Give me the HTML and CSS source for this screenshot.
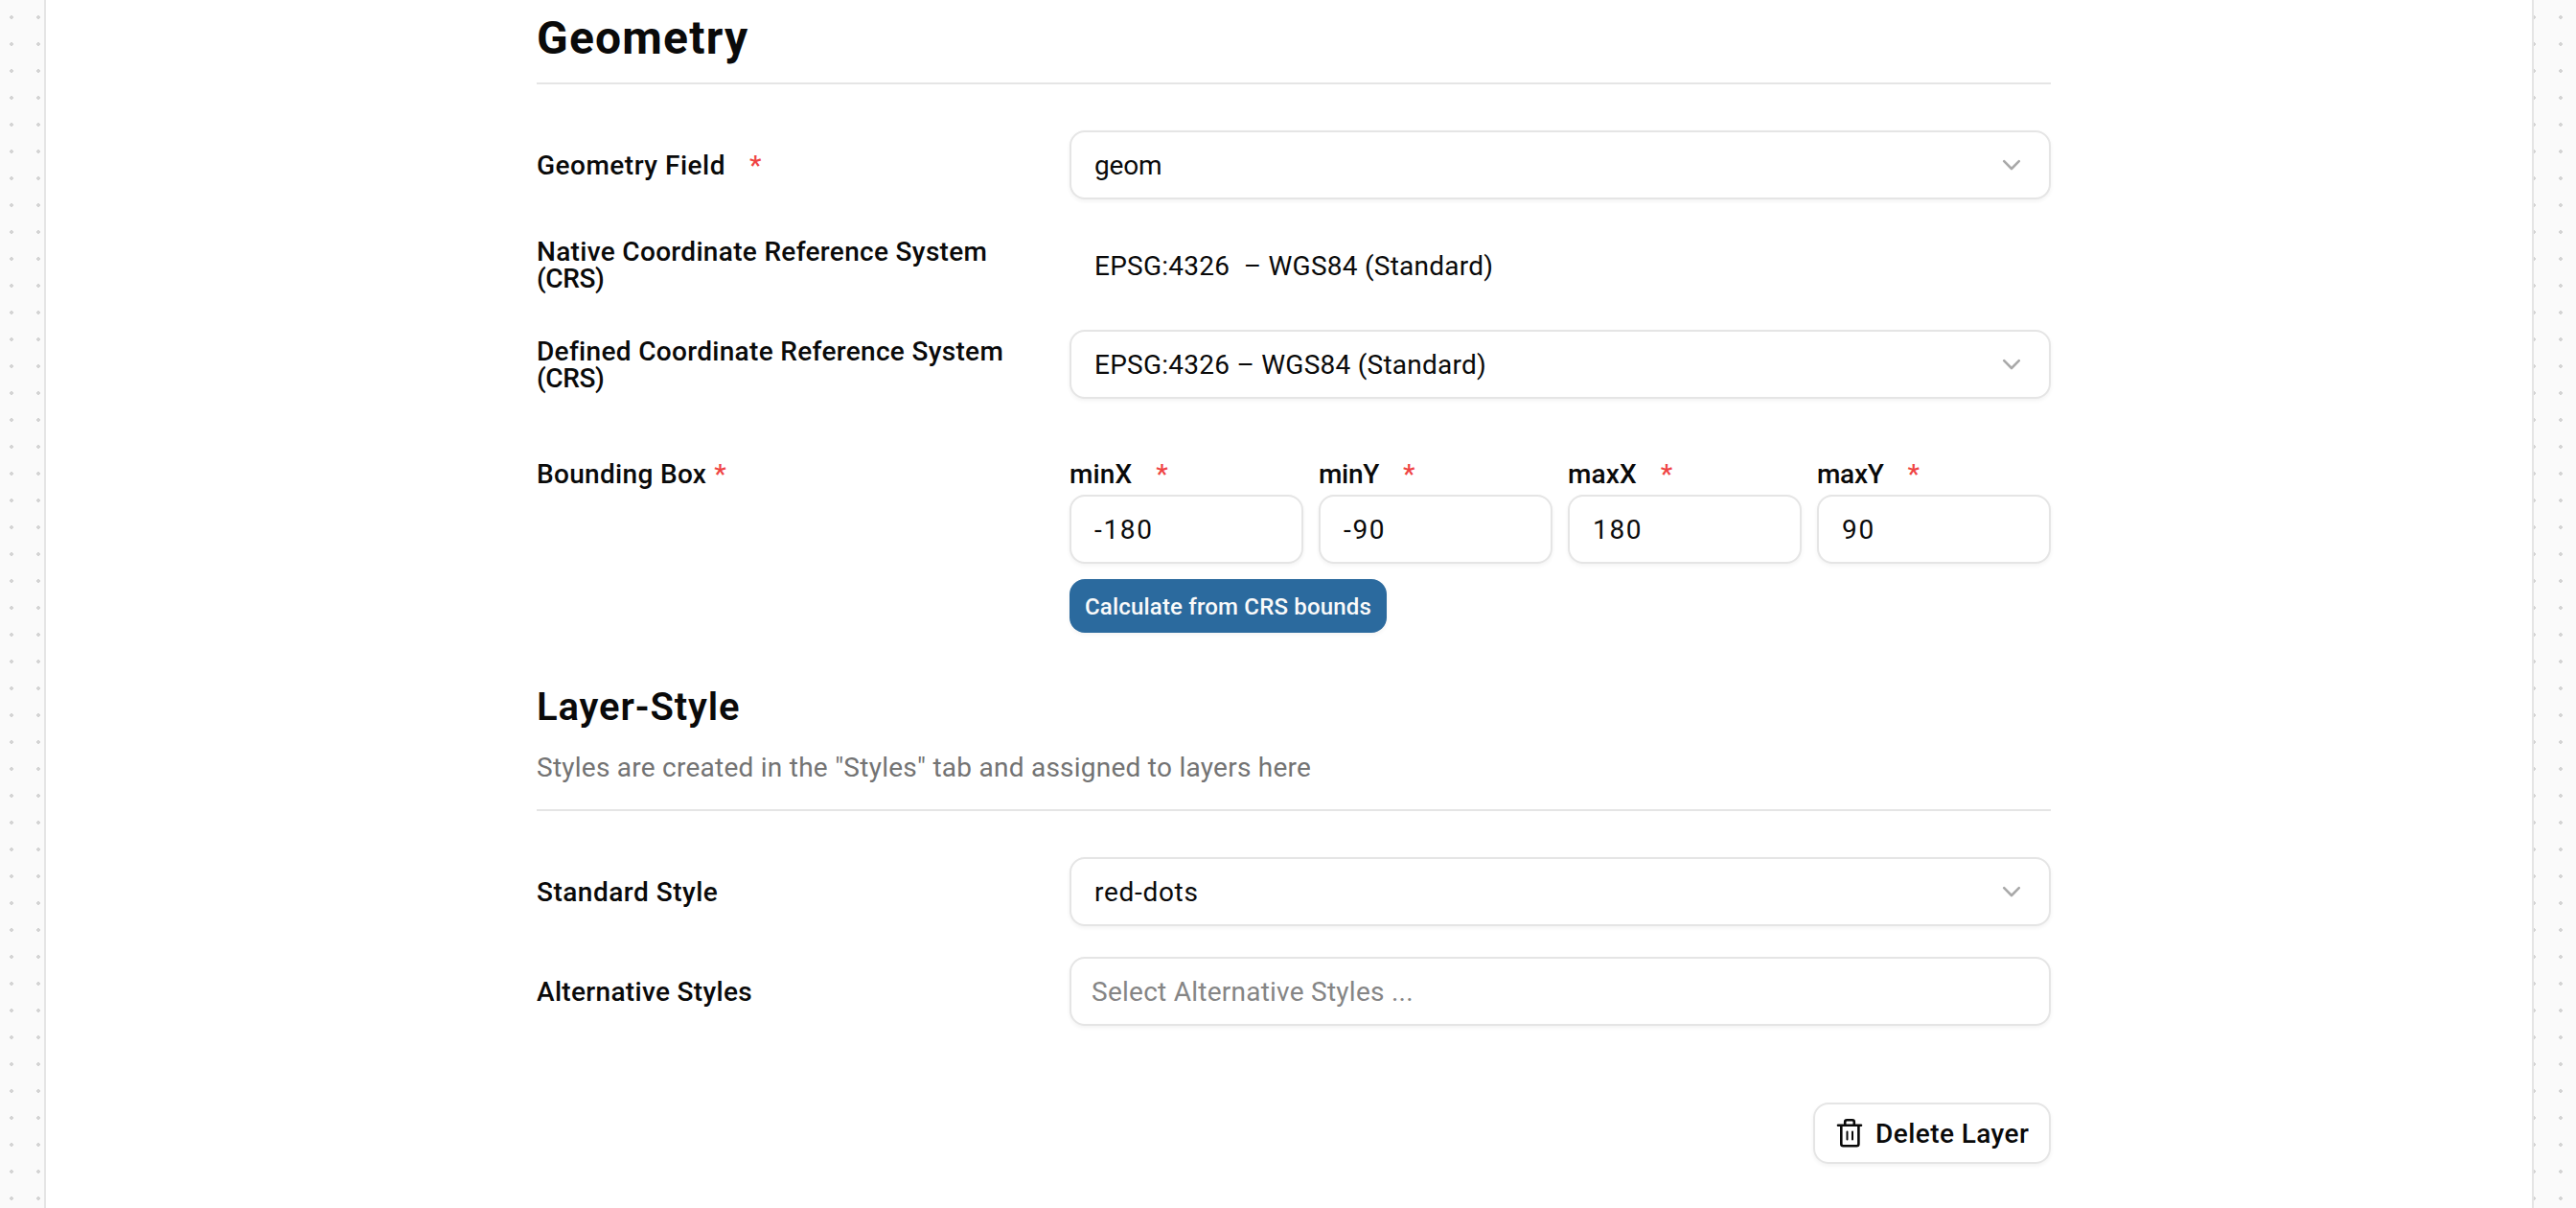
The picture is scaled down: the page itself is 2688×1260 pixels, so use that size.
FILE: index.html
```html
<!DOCTYPE html>
<html lang="en">
<head>
<meta charset="utf-8">
<title>Layer settings</title>
<link rel="stylesheet" href="styles.css">
</head>
<body>
<main class="page">
  <form class="content">
    <header class="section-head">
      <h1 class="title">Geometry</h1>
    </header>
    <section class="rows">
      <div class="row">
        <div class="label"><span class="t-wide">Geometry Field</span><span class="star">*</span></div>
        <div class="control"><span class="t-tight">geom</span>
          <svg class="chevron" viewBox="0 0 24 24"><path d="M4.2 8.2 12 16l7.8-7.8"/></svg></div>
      </div>
      <div class="row">
        <div class="label">Native Coordinate Reference System <span class="t-crs">(CRS)</span></div>
        <div class="static">EPSG:4326 &nbsp;– WGS84 (Standard)</div>
      </div>
      <div class="row">
        <div class="label">Defined Coordinate Reference System <span class="t-crs">(CRS)</span></div>
        <div class="control"><span>EPSG:4326 – WGS84 (Standard)</span>
          <svg class="chevron" viewBox="0 0 24 24"><path d="M4.2 8.2 12 16l7.8-7.8"/></svg></div>
      </div>
      <div class="row row-bbox">
        <div class="label">Bounding Box<span class="star star-near">*</span></div>
        <div class="bbox">
          <div class="bounds">
            <div class="bound"><div class="label"><span class="t-x">minX</span><span class="star">*</span></div><div class="control num">-180</div></div>
            <div class="bound"><div class="label"><span class="t-y">minY</span><span class="star">*</span></div><div class="control num">-90</div></div>
            <div class="bound"><div class="label"><span class="t-x">maxX</span><span class="star">*</span></div><div class="control num">180</div></div>
            <div class="bound"><div class="label"><span class="t-y">maxY</span><span class="star">*</span></div><div class="control num">90</div></div>
          </div>
          <div class="btn-primary">Calculate from CRS bounds</div>
        </div>
      </div>
    </section>

    <header class="section-head section-style">
      <h2 class="subtitle">Layer-Style</h2>
      <p class="hint">Styles are created in the "Styles" tab and assigned to layers here</p>
    </header>
    <section class="rows">
      <div class="row">
        <div class="label t-wide">Standard Style</div>
        <div class="control"><span class="t-dots">red-dots</span>
          <svg class="chevron" viewBox="0 0 24 24"><path d="M4.2 8.2 12 16l7.8-7.8"/></svg></div>
      </div>
      <div class="row">
        <div class="label">Alternative Styles</div>
        <div class="control placeholder">Select Alternative Styles ...</div>
      </div>
    </section>

    <footer class="actions">
      <div class="btn-outline">
        <svg class="trash" viewBox="0 0 28 32"><path d="M2 7.8h24M9.2 7.5V4.3a2 2 0 0 1 2-2h5.6a2 2 0 0 1 2 2v3.2M5.3 8v19.2a2 2 0 0 0 2 2h14.1a2 2 0 0 0 2-2V8"/><path class="trash-bars" d="M11.5 14.6v8M17 14.6v8"/></svg>
        <span class="btn-text">Delete Layer</span>
      </div>
    </footer>
  </form>
</main>
</body>
</html>
```
FILE: styles.css
```css
* { box-sizing: border-box; }

body {
  margin: 0;
  height: 1260px;
  overflow: hidden;
  display: flex;
  padding-left: 46px;
  background-color: #fafafa;
  background-image: radial-gradient(circle at 14px 14px, #d4d4d4 1.9px, transparent 1.9px);
  background-size: 28px 28px;
  background-position: -2px 4px;
  color: #0a0a0a;
  font-family: Roboto, "Noto Sans", sans-serif;
  font-size: 28px;
  line-height: 28px;
  letter-spacing: 0.25px;
}

.page {
  flex: none;
  width: 2598px;
  padding-left: 512px;
  border: solid #e5e5e5;
  border-width: 0 2px;
  background: #fff;
}

.content { width: 1580px; }

.section-head {
  padding: 12px 0 18px;
  border-bottom: 2px solid #e5e5e5;
}

.section-style { padding: 54px 0 23px; }

.title {
  margin: 0;
  font-size: 48px;
  line-height: 56px;
  font-weight: 700;
  letter-spacing: 1.2px;
}

.subtitle {
  margin: 0;
  font-size: 40px;
  line-height: 48px;
  font-weight: 600;
  letter-spacing: 0.9px;
}

.hint {
  margin: 19px 0 0;
  line-height: 40px;
  color: #737373;
}

.rows {
  display: flex;
  flex-direction: column;
  gap: 32px;
  padding-top: 48px;
}

.row {
  display: grid;
  grid-template-columns: 524px 1024px;
  column-gap: 32px;
  align-items: center;
}

.row-bbox {
  align-items: start;
  margin-top: 32px;
}

.label {
  padding-top: 2px;
  font-weight: 500;
  letter-spacing: 0.32px;
}

.label.t-wide { letter-spacing: 0.5px; }

.row-bbox .label { padding-top: 1px; }

.star {
  margin-left: 25px;
  color: #ef4444;
}

.star-near { margin-left: 8px; }

.control {
  display: flex;
  align-items: center;
  justify-content: space-between;
  height: 72px;
  padding: 2px 25px 0 24px;
  border: 2px solid #e5e5e5;
  border-radius: 16px;
  background: #fff;
  box-shadow: 0 2px 4px rgba(0, 0, 0, 0.05);
}

.static {
  height: 72px;
  padding: 24px 26px 0;
}

.placeholder {
  padding-left: 21px;
  color: #858585;
}

.num { letter-spacing: 1.7px; }

.chevron {
  width: 24px;
  height: 24px;
  margin: 0 2px 2px 0;
  fill: none;
  stroke: #a9a9a9;
  stroke-width: 2.6;
  stroke-linecap: round;
  stroke-linejoin: round;
}

.bounds {
  display: grid;
  grid-template-columns: repeat(4, 244px);
  gap: 16px;
}

.bound .label { margin-bottom: 7px; }

.btn-primary {
  width: 331px;
  height: 56px;
  margin-top: 16px;
  padding: 15px 16px 0;
  border-radius: 16px;
  background: #2b6a9e;
  color: #fafafa;
  font-size: 24px;
  font-weight: 500;
  letter-spacing: 0.18px;
  white-space: nowrap;
  box-shadow: 0 2px 4px rgba(0, 0, 0, 0.05);
}

.actions {
  display: flex;
  justify-content: flex-end;
  padding-top: 80px;
}

.btn-outline {
  display: flex;
  align-items: center;
  width: 248px;
  height: 64px;
  padding-left: 22px;
  gap: 13px;
  border: 2px solid #e5e5e5;
  border-radius: 16px;
  font-weight: 500;
  letter-spacing: 0.43px;
  white-space: nowrap;
  box-shadow: 0 2px 4px rgba(0, 0, 0, 0.05);
}

.btn-text { padding-top: 2px; }

.trash {
  width: 28px;
  height: 32px;
  fill: none;
  stroke: #0a0a0a;
  stroke-width: 2.6;
  stroke-linecap: round;
  stroke-linejoin: round;
}

.trash-bars { stroke-width: 2; }

.t-wide { letter-spacing: 0.5px; }
.t-dots { letter-spacing: 0.7px; }
.t-tight { letter-spacing: -0.18px; }
.t-crs { letter-spacing: -0.39px; }
.t-x { letter-spacing: 0.13px; }
.t-y { letter-spacing: -0.28px; }
```
